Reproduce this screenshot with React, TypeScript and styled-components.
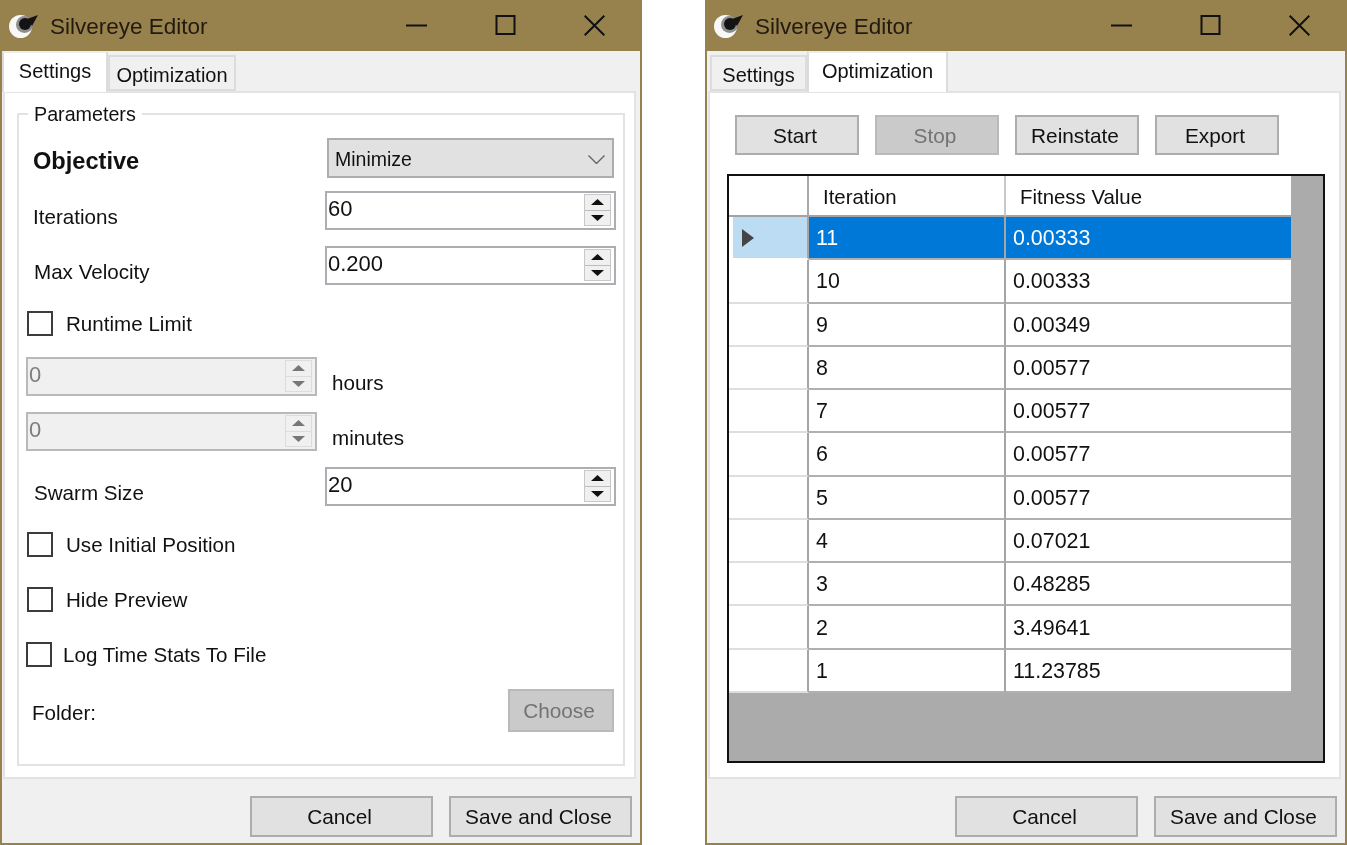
import React from "react";
import styled, { createGlobalStyle } from "styled-components";

const Global = createGlobalStyle`
  html, body { margin: 0; padding: 0; background: #fff; }
  body { font-family: "Liberation Sans", Arial, sans-serif; color: #111; }
  * { box-sizing: border-box; }
`;
const Page = styled.div`
  width: 1347px; height: 845px; display: flex; justify-content: space-between; overflow: hidden; background: #fff;
  filter: blur(0.45px);
`;
const Win = styled.div<{ $w: number }>`
  width: ${(p) => p.$w}px; height: 845px; display: flex; flex-direction: column;
  border: solid #97824e; border-width: 0 2px 2px 2px; background: #f0f0f0;
`;
const TitleBar = styled.div`
  height: 51px; flex: none; background: #97824e; margin: 0 -2px; display: flex; align-items: center; padding: 0 37px 0 8px;
`;
const Title = styled.div`
  font-size: 22.5px; color: #221a10; margin-left: 10px; flex: 1; transform: translateY(1px);
`;
const Controls = styled.div`
  display: flex; align-items: center; gap: 68px;
`;
const ControlIcon = styled.svg`
  display: block; width: 21px; height: 21px; flex: none; fill: none; stroke: #111; stroke-width: 2;
`;
const TabStrip = styled.div<{ $pad: number }>`
  height: 40px; flex: none; display: flex; align-items: flex-end; padding-left: ${(p) => p.$pad}px; position: relative; z-index: 1;
`;
const Tab = styled.div<{ $active?: boolean; $w: number }>`
  width: ${(p) => p.$w}px; font-size: 20px; text-align: center;
  height: ${(p) => (p.$active ? 41 : 36)}px;
  margin-bottom: ${(p) => (p.$active ? -1 : 0)}px;
  background: ${(p) => (p.$active ? "#fff" : "#f0f0f0")};
  border: 2px solid #dcdcdc;
  border-top-color: ${(p) => (p.$active ? "#ececec" : "#dcdcdc")};
  border-bottom: ${(p) => (p.$active ? "none" : "2px solid #dcdcdc")};
  padding-top: 6px;
  line-height: 25px;
`;
const Panel = styled.div`
  height: 688px; flex: none; margin: 0 4px 0 1px; background: #fff; border: 2px solid #e3e3e3; position: relative;
`;
const Group = styled.div`
  position: absolute; left: 12px; top: 20px; width: 608px; height: 653px; border: 2px solid #e3e3e3;
`;
const Legend = styled.div`
  position: absolute; left: 9px; top: -13px; background: #fff; padding: 0 6px; font-size: 19.7px; line-height: 24px;
`;
const FormBody = styled.div`
  display: flex; flex-direction: column; padding-top: 23px;
`;
const Row = styled.div<{ $h: number }>`
  height: ${(p) => p.$h}px; display: flex; align-items: center; position: relative;
`;
const Label = styled.div<{ $x: number; $dy?: number }>`
  font-size: 20.6px;
  margin-left: ${(p) => p.$x}px; transform: translateY(${(p) => p.$dy ?? 0}px);
  flex: none; white-space: nowrap;
`;
const StrongLabel = styled(Label)`
  font-size: 23.6px; font-weight: 700;
`;
const SelectBox = styled.div`
  margin-left: auto; margin-right: 9px; width: 287px; height: 40px; background: #e1e1e1; border: 2px solid #adadad;
  display: flex; align-items: center; justify-content: space-between; padding: 2px 7px 0 6px; font-size: 19.5px;
`;
const Chevron = styled.svg`
  width: 17px; height: 9px; display: block; fill: none; stroke: #666; stroke-width: 1.4;
`;
const Spin = styled.div<{ $off?: boolean; $right?: boolean }>`
  width: 291px; height: 39px; flex: none; display: flex; align-items: stretch;
  margin-left: ${(p) => (p.$right ? "auto" : "7px")}; margin-right: ${(p) => (p.$right ? "7px" : "0")};
  background: ${(p) => (p.$off ? "#f0f0f0" : "#fff")};
  border: 2px solid ${(p) => (p.$off ? "#b9b9b9" : "#adadb4")};
  color: ${(p) => (p.$off ? "#7d7d7d" : "#111")};
`;
const SpinText = styled.div`
  flex: 1; padding-left: 1px; font-size: 22px; line-height: 32px;
`;
const SpinBtns = styled.div<{ $off?: boolean }>`
  width: 27px; margin: 1px 3px 2px 0; display: flex; flex-direction: column; gap: 1px;
  background: ${(p) => (p.$off ? "#dcdcdc" : "#bdbdbd")}; border: 1px solid ${(p) => (p.$off ? "#dcdcdc" : "#c8c8c8")};
`;
const SpinBtn = styled.div<{ $off?: boolean }>`
  flex: 1; background: #f0f0f0; display: flex; align-items: center; justify-content: center; color: ${(p) => (p.$off ? "#777" : "#111")};
`;
const Tri = styled.svg`
  width: 13px; height: 6px; display: block; fill: currentColor;
`;
const Check = styled.div<{ $x: number }>`
  width: 26px; height: 25px; flex: none; margin-left: ${(p) => p.$x}px; background: #fff; border: 2px solid #3c3c3c;
`;
const Button = styled.div<{ $w: number; $off?: boolean; $h?: number }>`
  width: ${(p) => p.$w}px; height: ${(p) => p.$h ?? 41}px; flex: none; display: flex; align-items: center; justify-content: center;
  padding: 1px 4px 0 0;
  font-size: 20.8px; background: ${(p) => (p.$off ? "#cacaca" : "#e1e1e1")}; border: 2px solid ${(p) => (p.$off ? "#bababa" : "#adadad")};
  color: ${(p) => (p.$off ? "#737373" : "#111")};
`;
const ChooseWrap = styled.div`
  margin-left: auto; margin-right: 9px;
`;
const Footer = styled.div`
  flex: 1; display: flex; justify-content: flex-end; align-items: flex-start; gap: 16px; padding: 17px 8px 0 0;
`;
const Toolbar = styled.div`
  display: flex; gap: 16px; padding: 22px 0 0 25px;
`;
const Grid = styled.div`
  position: absolute; left: 17px; top: 81px; width: 598px; height: 589px; background: #ababab; border: 2px solid #111;
`;
const GridRow = styled.div<{ $head?: boolean }>`
  display: grid; grid-template-columns: 80px 197px 285px; width: 562px; height: ${(p) => (p.$head ? "41px" : "43.27px")};
  background: #fff;
`;
const HeadCell = styled.div`
  display: flex; align-items: center; padding: 3px 0 0 14px; font-size: 20.4px; border-right: 2px solid #c8c8c8; border-bottom: 2px solid #a3a3a3;
  &:first-child { border-right-color: #a9a9a9; }
  &:last-child { border-right: none; }
`;
const RowHead = styled.div<{ $sel?: boolean }>`
  border-right: 2px solid #a5a5a5; border-bottom: 2px solid ${(p) => (p.$sel ? "#fff" : "#dedede")};
  display: flex; align-items: center;
  background: ${(p) => (p.$sel ? "linear-gradient(90deg,#fff 4px,#bcdcf4 4px)" : "#fff")};
`;
const Cell = styled.div<{ $sel?: boolean }>`
  display: flex; align-items: center; padding: 2px 0 0 7px; font-size: 21.4px; border-right: 2px solid #a5a5a5; border-bottom: 2px solid #b0b0b0;
  background: ${(p) => (p.$sel ? "#0078d7" : "#fff")}; color: ${(p) => (p.$sel ? "#fff" : "#111")};
  &:last-child { border-right: none; }
`;
const Arrow = styled.svg`
  width: 12px; height: 18px; margin-left: 13px; display: block; fill: #444;
`;

const Logo = () => (
  <svg width="32" height="32" viewBox="0 0 32 32">
    <circle cx="12.5" cy="16.5" r="11.5" fill="#f8f8f8" />
    <circle cx="16.5" cy="14.5" r="8.5" fill="#8d8d8d" />
    <circle cx="17" cy="14" r="6" fill="#141414" />
    <path d="M19 9 L30 5 L24 16 Z" fill="#141414" />
  </svg>
);
const WindowControls = () => (
  <Controls>
    <ControlIcon viewBox="0 0 21 21"><path d="M0 10.5 H21" /></ControlIcon>
    <ControlIcon viewBox="0 0 21 21"><rect x="1.5" y="1" width="18" height="18" /></ControlIcon>
    <ControlIcon viewBox="0 0 21 21"><path d="M0.7 0.7 L20.3 20.3 M20.3 0.7 L0.7 20.3" /></ControlIcon>
  </Controls>
);
const Spinner = ({ value, off, right }: { value: string; off?: boolean; right?: boolean }) => (
  <Spin $off={off} $right={right}>
    <SpinText>{value}</SpinText>
    <SpinBtns $off={off}>
      <SpinBtn $off={off}><Tri viewBox="0 0 13 6"><path d="M6.5 0 L13 6 H0 Z" /></Tri></SpinBtn>
      <SpinBtn $off={off}><Tri viewBox="0 0 13 6"><path d="M0 0 H13 L6.5 6 Z" /></Tri></SpinBtn>
    </SpinBtns>
  </Spin>
);
const Chrome = () => (
  <TitleBar>
    <Logo />
    <Title>Silvereye Editor</Title>
    <WindowControls />
  </TitleBar>
);
const FooterBar = () => (
  <Footer>
    <Button $w={183}>Cancel</Button>
    <Button $w={183}>Save and Close</Button>
  </Footer>
);

const rows: [string, string][] = [
  ["11", "0.00333"], ["10", "0.00333"], ["9", "0.00349"], ["8", "0.00577"], ["7", "0.00577"], ["6", "0.00577"],
  ["5", "0.00577"], ["4", "0.07021"], ["3", "0.48285"], ["2", "3.49641"], ["1", "11.23785"],
];

export default function App() {
  return (
    <>
      <Global />
      <Page>
        <Win $w={642}>
          <Chrome />
          <TabStrip $pad={0}>
            <Tab $active $w={106}>Settings</Tab>
            <Tab $w={128}>Optimization</Tab>
          </TabStrip>
          <Panel>
            <Group>
              <Legend>Parameters</Legend>
              <FormBody>
                <Row $h={40}>
                  <StrongLabel $x={14} $dy={3}>Objective</StrongLabel>
                  <SelectBox>Minimize<Chevron viewBox="0 0 17 9"><path d="M0.5 0.5 L8.5 8.5 L16.5 0.5" /></Chevron></SelectBox>
                </Row>
                <Row $h={13} />
                <Row $h={39}><Label $x={14} $dy={6}>Iterations</Label><Spinner value="60" right /></Row>
                <Row $h={16} />
                <Row $h={39}><Label $x={15} $dy={6}>Max Velocity</Label><Spinner value="0.200" right /></Row>
                <Row $h={26} />
                <Row $h={25}><Check $x={8} /><Label $x={13}>Runtime Limit</Label></Row>
                <Row $h={21} />
                <Row $h={39}><Spinner value="0" off /><Label $x={15} $dy={6}>hours</Label></Row>
                <Row $h={16} />
                <Row $h={39}><Spinner value="0" off /><Label $x={15} $dy={6}>minutes</Label></Row>
                <Row $h={16} />
                <Row $h={39}><Label $x={15} $dy={6}>Swarm Size</Label><Spinner value="20" right /></Row>
                <Row $h={26} />
                <Row $h={25}><Check $x={8} /><Label $x={13}>Use Initial Position</Label></Row>
                <Row $h={30} />
                <Row $h={25}><Check $x={8} /><Label $x={13}>Hide Preview</Label></Row>
                <Row $h={30} />
                <Row $h={25}><Check $x={7} /><Label $x={11}>Log Time Stats To File</Label></Row>
                <Row $h={22} />
                <Row $h={43}><Label $x={13} $dy={2}>Folder:</Label><ChooseWrap><Button $w={106} $h={43} $off>Choose</Button></ChooseWrap></Row>
              </FormBody>
            </Group>
          </Panel>
          <FooterBar />
        </Win>
        <Win $w={642}>
          <Chrome />
          <TabStrip $pad={3}>
            <Tab $w={97}>Settings</Tab>
            <Tab $active $w={141}>Optimization</Tab>
          </TabStrip>
          <Panel>
            <Toolbar>
              <Button $w={124} $h={40}>Start</Button>
              <Button $w={124} $h={40} $off>Stop</Button>
              <Button $w={124} $h={40}>Reinstate</Button>
              <Button $w={124} $h={40}>Export</Button>
            </Toolbar>
            <Grid>
              <GridRow $head>
                <HeadCell />
                <HeadCell>Iteration</HeadCell>
                <HeadCell>Fitness Value</HeadCell>
              </GridRow>
              {rows.map(([a, b], i) => (
                <GridRow key={i}>
                  <RowHead $sel={i === 0}>{i === 0 && <Arrow viewBox="0 0 12 18"><path d="M0 0 L12 9 L0 18 Z" /></Arrow>}</RowHead>
                  <Cell $sel={i === 0}>{a}</Cell>
                  <Cell $sel={i === 0}>{b}</Cell>
                </GridRow>
              ))}
            </Grid>
          </Panel>
          <FooterBar />
        </Win>
      </Page>
    </>
  );
}
